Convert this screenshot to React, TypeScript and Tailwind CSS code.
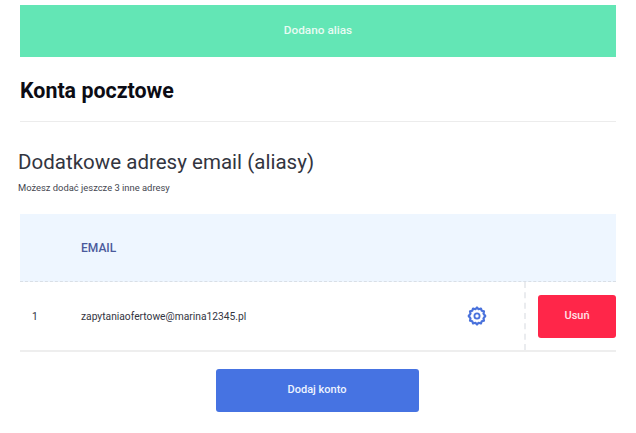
import React from 'react';

const GearIcon = () => (
  <svg width="22" height="22" viewBox="0 0 22 22" fill="none" stroke="#4a72dc">
    <path
      d="M11 2.5l1.6 1.7 2.3-.7.8 2.2 2.3.6-.5 2.3L19.3 11l-1.8 2.4.5 2.3-2.3.6-.8 2.2-2.3-.7L11 19.5l-1.6-1.7-2.3.7-.8-2.2-2.3-.6.5-2.3L2.7 11l1.8-2.4-.5-2.3 2.3-.6.8-2.2 2.3.7z"
      strokeWidth="2.2"
      strokeLinejoin="round"
    />
    <circle cx="11" cy="11" r="2.6" strokeWidth="1.8" />
  </svg>
);

export default function App() {
  return (
    <div className="w-[636px] h-[433px] bg-white overflow-hidden pt-[5px] pl-5 pr-5 font-['Roboto',sans-serif]">
      <div className="h-[52px] bg-[#63e6b5] flex items-center justify-center text-[11.8px] font-medium text-[#e8fbf3]">
        Dodano alias
      </div>

      <div className="h-[65px] flex items-center border-b border-[#ececec]">
        <h1 className="text-[21.4px] font-bold text-[#0c0c14] mt-[4px]">Konta pocztowe</h1>
      </div>

      <h2 className="mt-[27px] -ml-0.5 text-[20.5px] leading-[26px] text-[#33353f] tracking-[0.02px]">
        Dodatkowe adresy email (aliasy)
      </h2>
      <p className="mt-[8px] -ml-0.5 text-[9.4px] leading-[10px] text-[#44464f]">
        Możesz dodać jeszcze 3 inne adresy
      </p>

      <div className="mt-[21px]">
        <div className="h-[68px] flex items-center bg-[#eef6ff] border-b border-dashed border-[#d9dfe6]">
          <span className="ml-[61px] mt-[1px] text-[12px] font-medium text-[#4a5a9c]">EMAIL</span>
        </div>

        <div className="h-[70px] flex border-b-2 border-[#eeeeee]">
          <div className="flex-1 flex items-center text-[10.25px] text-[#33353f]">
            <span className="w-[61px] pl-[12px] mt-[1px]">1</span>
            <span className="flex-1 mt-[1px]">zapytaniaofertowe@marina12345.pl</span>
            <span className="mr-[36px] flex"><GearIcon /></span>
          </div>
          <div className="w-[92px] flex items-center justify-end border-l-2 border-dashed border-[#eaecef]">
            <button className="w-[78px] h-[43px] rounded-[3px] bg-[#ff2649] text-[11px] font-medium text-[#ffe3e8]">
              Usuń
            </button>
          </div>
        </div>

        <div className="mt-[17px] flex justify-center pr-[2px]">
          <button className="w-[203px] h-[43px] rounded-[3px] bg-[#4673e2] text-[11px] font-medium text-[#eef3ff]">
            Dodaj konto
          </button>
        </div>
      </div>
    </div>
  );
}
